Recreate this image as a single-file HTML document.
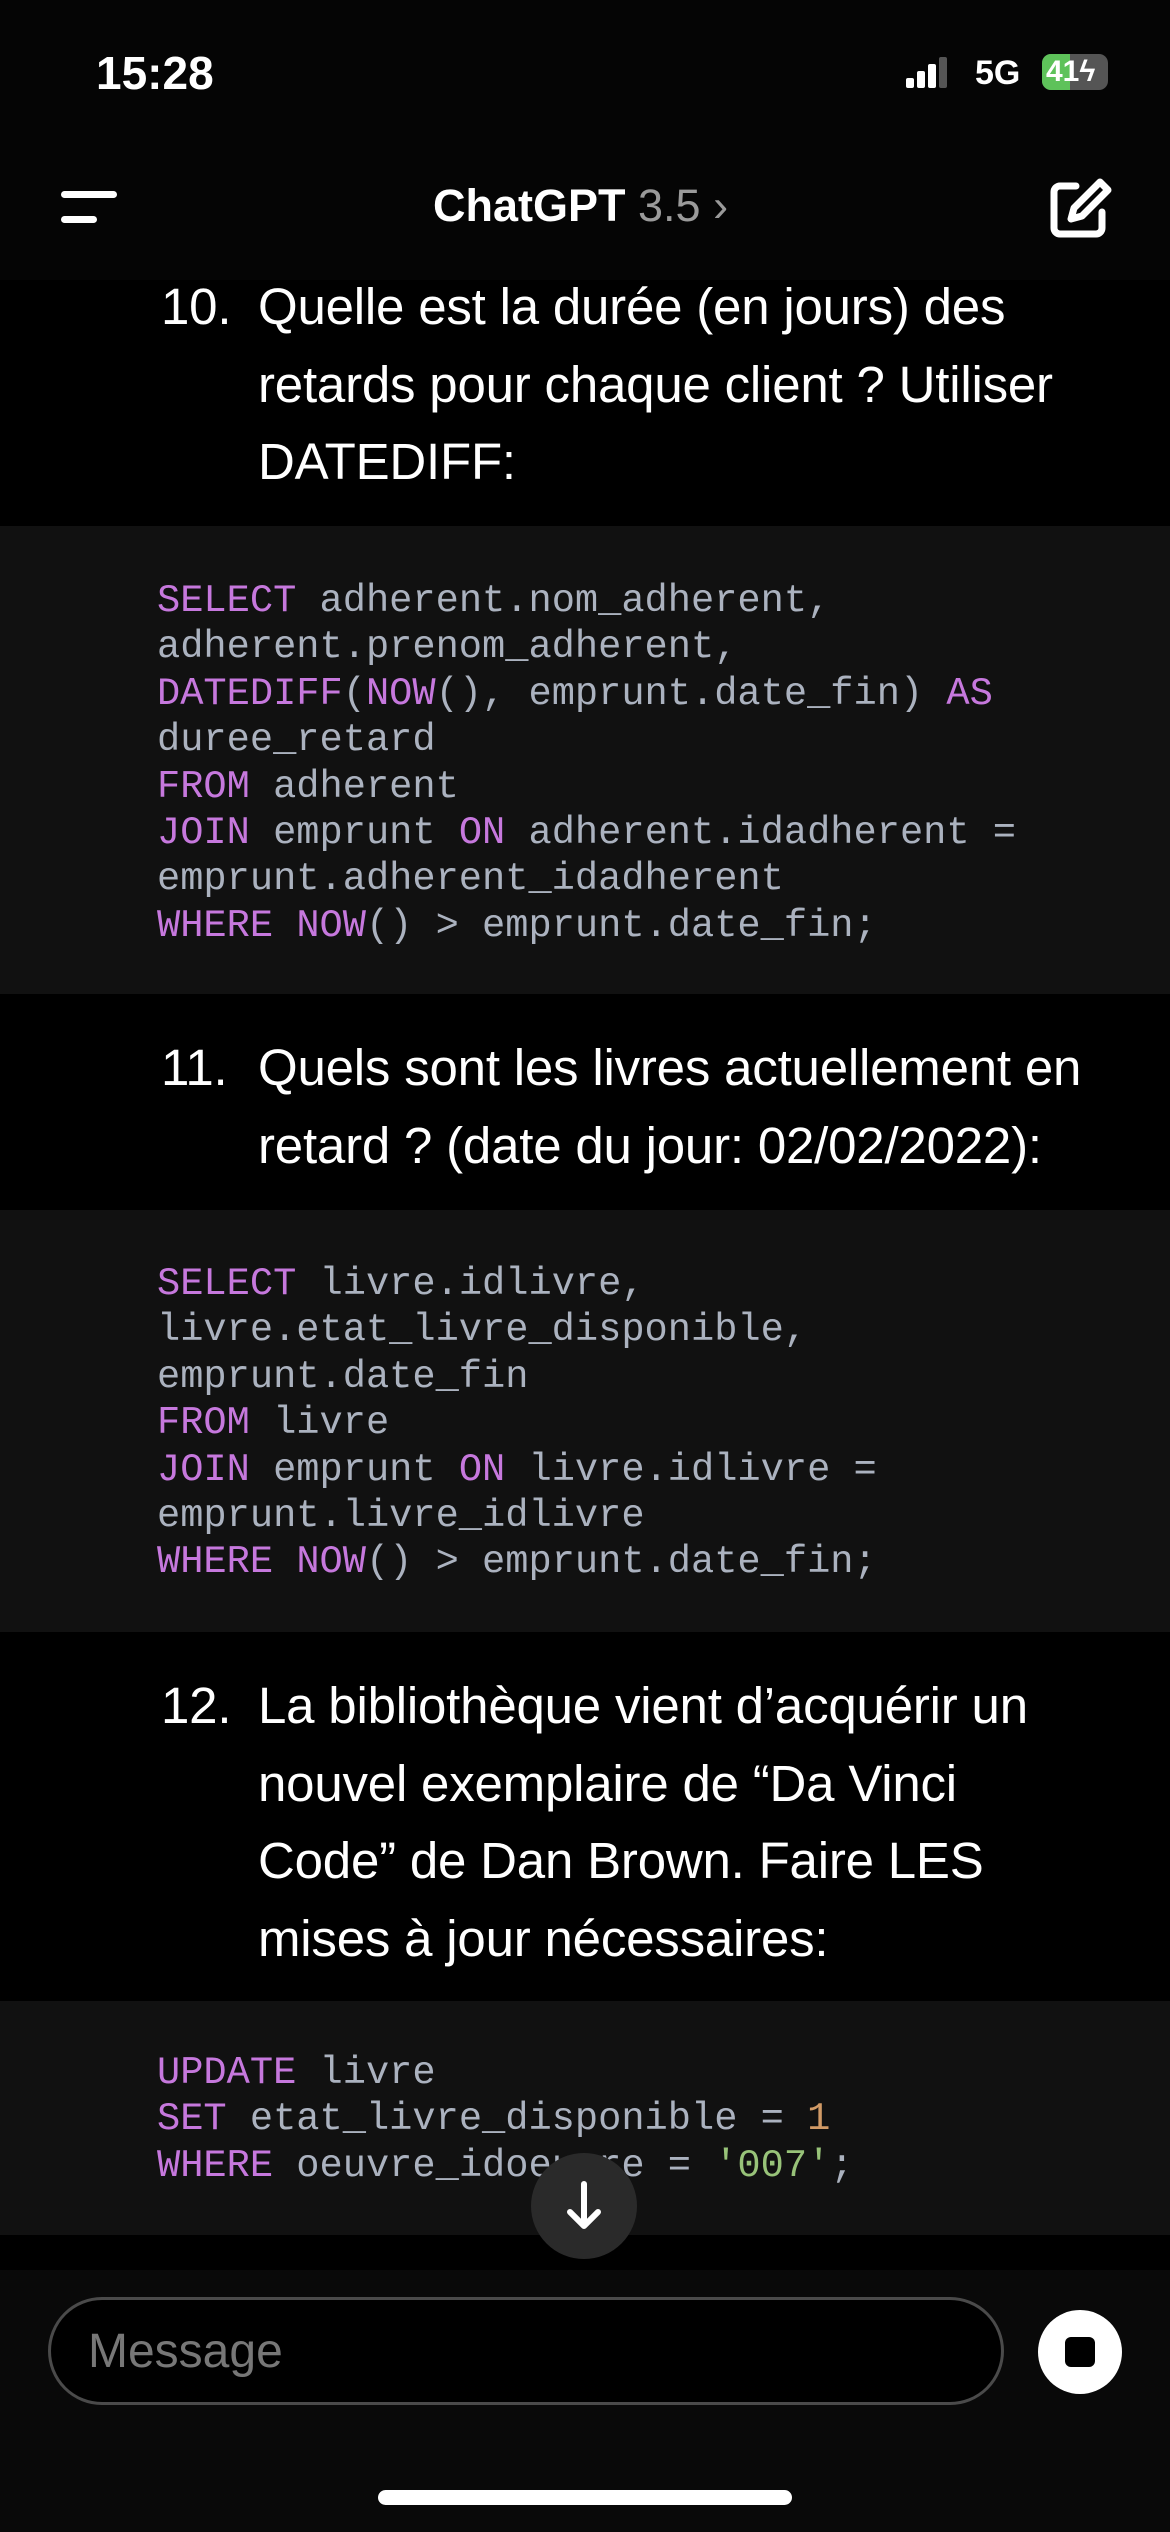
<!DOCTYPE html>
<html><head><meta charset="utf-8"><style>
*{margin:0;padding:0;box-sizing:border-box}
html,body{width:1170px;height:2532px;background:#000;overflow:hidden;font-family:"Liberation Sans",sans-serif;color:#fff}
.abs{position:absolute}
.code{position:absolute;left:0;width:1170px;background:#111111}
.code pre{position:absolute;left:157px;font-family:"Liberation Mono",monospace;font-size:38.7px;line-height:46.4px;color:#abb2bf;white-space:pre}
.k{color:#c678dd}.n{color:#d19a66}.s{color:#98c379}
.item{position:absolute;left:0;width:1170px;font-size:51px;line-height:77.5px;white-space:nowrap;letter-spacing:-0.2px}
.item .num{position:absolute;left:161px}
.item .txt{position:absolute;left:258px}
</style></head><body>
<div class="abs" style="left:0;top:0;width:1170px;height:280px;background:#050505"></div>
<div class="abs" style="left:96px;top:46px;font-size:46px;font-weight:bold">15:28</div>
<!-- signal -->
<div class="abs" style="left:906px;top:78px;width:8px;height:10px;background:#fff;border-radius:2px"></div>
<div class="abs" style="left:917px;top:71px;width:8px;height:17px;background:#fff;border-radius:2px"></div>
<div class="abs" style="left:928px;top:64px;width:8px;height:24px;background:#fff;border-radius:2px"></div>
<div class="abs" style="left:939px;top:57px;width:8px;height:31px;background:#555;border-radius:2px"></div>
<div class="abs" style="left:975px;top:54px;font-size:34px;font-weight:bold">5G</div>
<div class="abs" style="left:1042px;top:54px;width:66px;height:36px;background:#555;border-radius:9px;overflow:hidden"><div style="width:28px;height:36px;background:#5ec25a"></div></div>
<div class="abs" style="left:1046px;top:55px;font-size:30px;font-weight:bold;color:#fff">41ϟ</div>
<!-- header -->
<div class="abs" style="left:61px;top:191px;width:56px;height:7px;background:#fff;border-radius:4px"></div>
<div class="abs" style="left:61px;top:216px;width:36px;height:7px;background:#fff;border-radius:4px"></div>
<div class="abs" style="left:433px;top:180px;font-size:45px;font-weight:bold">ChatGPT <span style="font-weight:normal;color:#9a9a9a">3.5 ›</span></div>
<svg class="abs" style="left:1048px;top:178px" width="66" height="62" viewBox="0 0 66 62" fill="none" stroke="#fff" stroke-width="7" stroke-linecap="round" stroke-linejoin="round"><path d="M28 8H12a6 6 0 0 0-6 6v36a6 6 0 0 0 6 6h36a6 6 0 0 0 6-6V34"/><path d="M52 4l8 8-26 26-11 3 3-11z"/></svg>

<div class="item" style="top:268px"><span class="num">10.</span><span class="txt">Quelle est la durée (en jours) des<br>retards pour chaque client ? Utiliser<br>DATEDIFF:</span></div>

<div class="code" style="top:526px;height:468px"><pre style="top:52px"><span class="k">SELECT</span> adherent.nom_adherent,
adherent.prenom_adherent,
<span class="k">DATEDIFF</span>(<span class="k">NOW</span>(), emprunt.date_fin) <span class="k">AS</span>
duree_retard
<span class="k">FROM</span> adherent
<span class="k">JOIN</span> emprunt <span class="k">ON</span> adherent.idadherent =
emprunt.adherent_idadherent
<span class="k">WHERE</span> <span class="k">NOW</span>() &gt; emprunt.date_fin;</pre></div>

<div class="item" style="top:1029px"><span class="num">11.</span><span class="txt">Quels sont les livres actuellement en<br>retard ? (date du jour: 02/02/2022):</span></div>

<div class="code" style="top:1210px;height:422px"><pre style="top:51px"><span class="k">SELECT</span> livre.idlivre,
livre.etat_livre_disponible,
emprunt.date_fin
<span class="k">FROM</span> livre
<span class="k">JOIN</span> emprunt <span class="k">ON</span> livre.idlivre =
emprunt.livre_idlivre
<span class="k">WHERE</span> <span class="k">NOW</span>() &gt; emprunt.date_fin;</pre></div>

<div class="item" style="top:1667px"><span class="num">12.</span><span class="txt">La bibliothèque vient d’acquérir un<br>nouvel exemplaire de “Da Vinci<br>Code” de Dan Brown. Faire LES<br>mises à jour nécessaires:</span></div>

<div class="code" style="top:2001px;height:234px"><pre style="top:49px"><span class="k">UPDATE</span> livre
<span class="k">SET</span> etat_livre_disponible = <span class="n">1</span>
<span class="k">WHERE</span> oeuvre_idoeuvre = <span class="s">'007'</span>;</pre></div>

<div class="abs" style="left:531px;top:2153px;width:106px;height:106px;border-radius:50%;background:#2a2a2a"></div>
<svg class="abs" style="left:560px;top:2180px" width="48" height="52" viewBox="0 0 48 52" fill="none" stroke="#fff" stroke-width="6" stroke-linecap="round" stroke-linejoin="round"><path d="M24 4v42M10 32l14 14 14-14"/></svg>

<div class="abs" style="left:0;top:2270px;width:1170px;height:262px;background:#090909"></div>
<div class="abs" style="left:48px;top:2297px;width:956px;height:108px;border:3px solid #4a4a4a;border-radius:54px;background:#000"></div>
<div class="abs" style="left:88px;top:2324px;font-size:48px;color:#777">Message</div>
<div class="abs" style="left:1038px;top:2310px;width:84px;height:84px;border-radius:50%;background:#fff"></div>
<div class="abs" style="left:1065px;top:2337px;width:30px;height:30px;border-radius:6px;background:#000"></div>
<div class="abs" style="left:378px;top:2490px;width:414px;height:15px;border-radius:8px;background:#fff"></div>
</body></html>
